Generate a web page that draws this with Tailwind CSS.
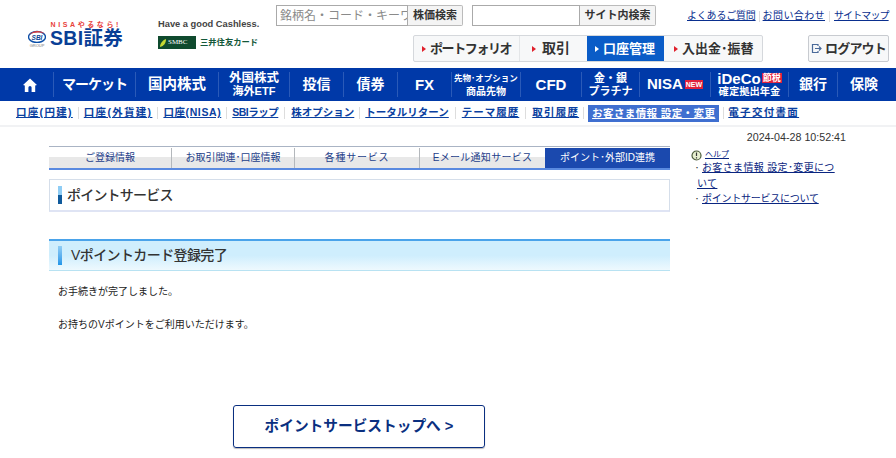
<!DOCTYPE html>
<html lang="ja">
<head>
<meta charset="UTF-8">
<title>ポイントサービス</title>
<script src="https://cdn.jsdelivr.net/npm/@tailwindcss/browser@4"></script>
</head>
<body class="bg-white text-[#333] font-['Liberation_Sans','Noto_Sans_CJK_JP',sans-serif] overflow-hidden">
<div class="w-[896px] h-[458px] overflow-hidden">

  <!-- header -->
  <header class="h-[68px] flex">
    <div class="w-[158px] pl-[28px] pt-[21px] shrink-0">
      <div class="w-[93px] text-right text-[7px] leading-[7px] tracking-[2.6px] font-bold text-[#e8413a] whitespace-nowrap">NISAやるなら!</div>
      <div class="flex items-end gap-[4px] h-[20px]">
        <div class="w-[18px] flex flex-col items-center">
          <svg width="18" height="13" viewBox="0 0 18 13"><ellipse cx="9" cy="7" rx="8.5" ry="5.5" fill="#fff" stroke="#0a4ea8" stroke-width="1.4"/><path d="M1 5 C5 0 13 0 17 4 C12 2 6 2 1 5Z" fill="#e03a3a"/><text x="9" y="10" text-anchor="middle" font-size="6.5" font-weight="700" font-style="italic" fill="#0a3f96" font-family="Liberation Sans">SBI</text></svg>
          <span class="text-[4px] leading-[5px] text-[#777]">GROUP</span>
        </div>
        <span class="text-[19.5px] leading-[20px] font-bold text-[#0a3f96] tracking-[0.3px]">SBI証券</span>
      </div>
    </div>
    <div class="w-[118px] pt-[17px] shrink-0">
      <div class="text-[9.3px] leading-[15px] font-bold text-[#444] whitespace-nowrap">Have a good Cashless.</div>
      <div class="flex items-center gap-[4px] mt-[4px]">
        <div class="w-[38px] h-[13px] bg-[#0f4a2e] flex items-center gap-[1px] pl-[1px]">
          <svg width="8" height="10" viewBox="0 0 8 10"><path d="M1 9 C1 5 4 2 7 1 C7 5 5 8 1 9Z" fill="#c5d832"/></svg>
          <span class="text-[7px] leading-[13px] text-white font-['Liberation_Serif']">SMBC</span>
        </div>
        <span class="text-[8.3px] leading-[13px] font-bold text-[#14583a] whitespace-nowrap">三井住友カード</span>
      </div>
    </div>
    <div class="flex-1 relative flex flex-col">
      <div class="flex items-start pt-[5px]">
        <input class="w-[132px] h-[21px] border border-[#aaa] text-[12px] placeholder:text-[#8a8a8a] pl-[3px] pr-0 outline-none" placeholder="銘柄名・コード・キーワード">
        <div class="w-[55px] h-[21px] border border-l-0 border-[#bbb] rounded-r-[2px] bg-[#f4f4f4] text-[11px] leading-[19px] font-bold text-center text-[#333]">株価検索</div>
        <input class="w-[108px] h-[21px] border border-[#aaa] ml-[9px] outline-none">
        <div class="w-[76px] h-[21px] border border-l-0 border-[#bbb] rounded-r-[2px] bg-[#f4f4f4] text-[11px] leading-[19px] font-bold text-center text-[#333]">サイト内検索</div>
        <div class="ml-[31px] flex items-center text-[10px] leading-[12px] pt-[5px] text-[#0a2f8f] whitespace-nowrap">
          <a class="underline tracking-[-0.2px]">よくあるご質問</a><span class="w-px h-[11px] bg-[#ddd] mx-[3px]"></span><a class="underline tracking-[0.4px]">お問い合わせ</a><span class="w-px h-[11px] bg-[#ddd] mx-[4px]"></span><a class="underline tracking-[-0.9px]">サイトマップ</a>
        </div>
      </div>
      <div class="flex mt-[9px]">
        <div class="flex h-[27px] ml-[137px] w-[350px] border border-[#d5d8dc] rounded-[2px] bg-[#f7f8f9] text-[13px] font-bold text-[#333] leading-[25px]">
          <div class="w-[106px] flex items-center pl-[8px] gap-[4px] whitespace-nowrap border-r border-[#e4e6e8] tracking-[-1.4px]"><span class="w-0 h-0 border-y-[3.5px] border-y-transparent border-l-[4px] border-l-[#e0202c]"></span>ポートフォリオ</div>
          <div class="w-[67px] flex items-center pl-[12px] gap-[6px] whitespace-nowrap text-[14px]"><span class="w-0 h-0 border-y-[3.5px] border-y-transparent border-l-[4px] border-l-[#e0202c]"></span>取引</div>
          <div class="w-[77px] flex items-center pl-[8px] gap-[4px] whitespace-nowrap bg-[#0a5cc7] text-white"><span class="w-0 h-0 border-y-[3.5px] border-y-transparent border-l-[4px] border-l-white"></span>口座管理</div>
          <div class="flex-1 flex items-center pl-[10px] gap-[4px] whitespace-nowrap"><span class="w-0 h-0 border-y-[3.5px] border-y-transparent border-l-[4px] border-l-[#e0202c]"></span>入出金･振替</div>
        </div>
        <div class="ml-[45px] w-[81px] h-[27px] border border-[#c8cbd0] rounded-[2px] bg-[#f7f8f9] flex items-center justify-center gap-[3px] text-[13px] font-bold text-[#333] whitespace-nowrap tracking-[-0.8px]">
          <svg width="11" height="11" viewBox="0 0 11 11" fill="none" stroke="#4a6a9a" stroke-width="1.2"><path d="M7 3V1.5H1.5v8H7V8"/><path d="M4 5.5h6M8 3.5l2 2-2 2"/></svg>ログアウト
        </div>
      </div>
    </div>
  </header>

  <!-- main nav -->
  <nav class="h-[33px] bg-[#0039a8] flex text-white font-bold text-center text-[14px] whitespace-nowrap">
    <div class="w-[54px] flex items-center justify-center pl-[7px] my-[4px] border-r border-[#2a5ab8]">
      <svg width="14" height="14" viewBox="0 0 14 14" fill="#fff"><path d="M7 0.5 14 7 12.2 7.6V14H8.6V9.5A1.6 1.6 0 0 0 5.4 9.5V14H1.8V7.6L0 7Z"/></svg>
    </div>
    <div class="w-[82px] my-[4px] leading-[25px] border-r border-[#2a5ab8] tracking-[-1px]">マーケット</div>
    <div class="w-[83px] my-[4px] leading-[25px] border-r border-[#2a5ab8] text-[14.5px]">国内株式</div>
    <div class="w-[71px] my-[4px] border-r border-[#2a5ab8] flex flex-col items-center justify-center text-[12.5px] leading-[13px]"><span>外国株式</span><span class="text-[11px]">海外ETF</span></div>
    <div class="w-[54px] my-[4px] leading-[25px] border-r border-[#2a5ab8]">投信</div>
    <div class="w-[54px] my-[4px] leading-[25px] border-r border-[#2a5ab8]">債券</div>
    <div class="w-[54px] my-[4px] leading-[25px] border-r border-[#2a5ab8] text-[15px]">FX</div>
    <div class="w-[69px] my-[4px] border-r border-[#2a5ab8] flex flex-col items-center justify-center text-[8.5px] leading-[13px]"><span>先物･オプション</span><span class="text-[10px]">商品先物</span></div>
    <div class="w-[61px] my-[4px] leading-[25px] border-r border-[#2a5ab8] text-[15px]">CFD</div>
    <div class="w-[58px] my-[4px] border-r border-[#2a5ab8] flex flex-col items-center justify-center text-[11px] leading-[13px]"><span>金・銀</span><span>プラチナ</span></div>
    <div class="w-[71px] my-[4px] border-r border-[#2a5ab8] flex items-center justify-center gap-[2px]"><span class="text-[15px]">NISA</span><span class="bg-[#e0203c] text-[7px] leading-[9px] px-[1px]">NEW</span></div>
    <div class="w-[78px] my-[4px] border-r border-[#2a5ab8] flex flex-col items-center justify-center leading-[13px]"><span class="flex items-center gap-[1px] text-[15px]">iDeCo<span class="bg-[#e0203c] text-[9px] leading-[10px] px-[1px]">節税</span></span><span class="text-[10.3px]">確定拠出年金</span></div>
    <div class="w-[49px] my-[4px] leading-[25px] border-r border-[#2a5ab8]">銀行</div>
    <div class="w-[52px] my-[4px] leading-[25px]">保険</div>
  </nav>

  <!-- sub nav -->
  <div class="h-[24px] flex items-center pl-[16px] text-[10.5px] font-bold text-[#0a3fa0] whitespace-nowrap">
    <a class="underline tracking-[1.3px]">口座(円建)</a><span class="w-px h-[12px] bg-[#ddd] mx-[5px]"></span>
    <a class="underline tracking-[1.3px]">口座(外貨建)</a><span class="w-px h-[12px] bg-[#ddd] mx-[5px]"></span>
    <a class="underline tracking-[0.6px]">口座(NISA)</a><span class="w-px h-[12px] bg-[#ddd] mx-[5px]"></span>
    <a class="underline tracking-[-0.5px]">SBIラップ</a><span class="w-px h-[12px] bg-[#ddd] mx-[6px]"></span>
    <a class="underline">株オプション</a><span class="w-px h-[12px] bg-[#ddd] mx-[5px]"></span>
    <a class="underline">トータルリターン</a><span class="w-px h-[12px] bg-[#ddd] mx-[6px]"></span>
    <a class="underline tracking-[1px]">テーマ履歴</a><span class="w-px h-[12px] bg-[#ddd] mx-[6px]"></span>
    <a class="underline tracking-[1.2px]">取引履歴</a><span class="w-px h-[12px] bg-[#ddd] mx-[4px]"></span>
    <a class="bg-[#3f6fd0] text-white underline px-[4px] leading-[17px] tracking-[0.4px]">お客さま情報 設定・変更</a><span class="w-px h-[12px] bg-[#ddd] mx-[4px]"></span>
    <a class="underline tracking-[1.3px]">電子交付書面</a>
  </div>
  <div class="h-[2px] bg-[#f1f2f4]"></div>

  <!-- body -->
  <div class="flex pl-[49px]">
    <main class="w-[621px] pt-[19px] shrink-0">
      <div class="flex h-[24px] pt-[1px] border-t border-[#aab4c4] border-b-2 border-b-[#5a8ae0] text-[10px] text-[#24408a] text-center leading-[20px] whitespace-nowrap">
        <div class="w-[123px] border-r border-[#b4b8bc] bg-gradient-to-b from-white from-45% to-[#e8e8e8] to-45%">ご登録情報</div>
        <div class="w-[123px] border-r border-[#b4b8bc] bg-gradient-to-b from-white from-45% to-[#e8e8e8] to-45%">お取引関連･口座情報</div>
        <div class="w-[125px] border-r border-[#b4b8bc] bg-gradient-to-b from-white from-45% to-[#e8e8e8] to-45% tracking-[0.8px]">各種サービス</div>
        <div class="w-[125px] bg-gradient-to-b from-white from-45% to-[#e8e8e8] to-45% tracking-[0.3px]">Eメール通知サービス</div>
        <div class="flex-1 bg-[#1b49ae] text-white">ポイント･外部ID連携</div>
      </div>
      <div class="mt-[9px] h-[33px] border border-[#d5deea] border-b-2 border-b-[#dfe4f4] flex items-center pl-[8px] gap-[5px]">
        <span class="w-[4px] h-[18px] bg-gradient-to-b from-[#8fcdf5] from-50% to-[#0f5a9c] to-50%"></span>
        <h1 class="text-[14px] font-medium text-[#333] tracking-[-0.8px]">ポイントサービス</h1>
      </div>
      <div class="mt-[27px] h-[32px] border-t-2 border-t-[#4aa3ea] border-b border-b-[#b8e2f2] bg-gradient-to-b from-[#cfeefd] from-50% to-[#eef9fe] flex items-center pl-[9px] gap-[9px]">
        <span class="w-[4px] h-[19px] bg-gradient-to-b from-[#8fcdf5] to-[#1f96e8]"></span>
        <h2 class="text-[14px] font-medium text-[#333] tracking-[-0.6px]">Vポイントカード登録完了</h2>
      </div>
      <p class="mt-[14px] pl-[9px] text-[10px] leading-[14px] text-[#222]">お手続きが完了しました。</p>
      <p class="mt-[19px] pl-[9px] text-[10px] leading-[14px] text-[#222]">お持ちのVポイントをご利用いただけます。</p>
      <a class="mt-[73px] ml-[184px] w-[252px] h-[43px] border border-[#0a2f80] rounded-[3px] shadow-[0_1px_1px_#bbb] flex items-center justify-center text-[14.7px] font-bold text-[#0a2f80]">ポイントサービストップへ &gt;</a>
    </main>
    <aside class="w-[147px] ml-[21px] text-[10px] text-[#0a2580]">
      <div class="h-[19px] text-right text-[#333] leading-[20px] whitespace-nowrap -mr-[8px] text-[10.7px]">2024-04-28 10:52:41</div>
      <div class="flex items-center gap-[3px] mt-[4px] h-[10px] text-[8px]">
        <svg width="11" height="11" viewBox="0 0 11 11"><circle cx="5.5" cy="5.5" r="4.5" fill="#e8f0d0" stroke="#4a5a3a" stroke-width="1.2"/><path d="M5.5 2.5v3.5M5.5 7.2v1.2" stroke="#333" stroke-width="1.2"/></svg><a class="underline">ヘルプ</a>
      </div>
      <ul class="leading-[15px]">
        <li class="pl-[6px]"><span class="inline-block w-[7px] -ml-[2px] text-[8px] text-[#222]">･</span><a class="underline tracking-[0.35px]">お客さま情報 設定･変更について</a></li>
        <li class="pl-[6px]"><span class="inline-block w-[7px] -ml-[2px] text-[8px] text-[#222]">･</span><a class="underline tracking-[-0.25px]">ポイントサービスについて</a></li>
      </ul>
    </aside>
  </div>
</div>
</body>
</html>
